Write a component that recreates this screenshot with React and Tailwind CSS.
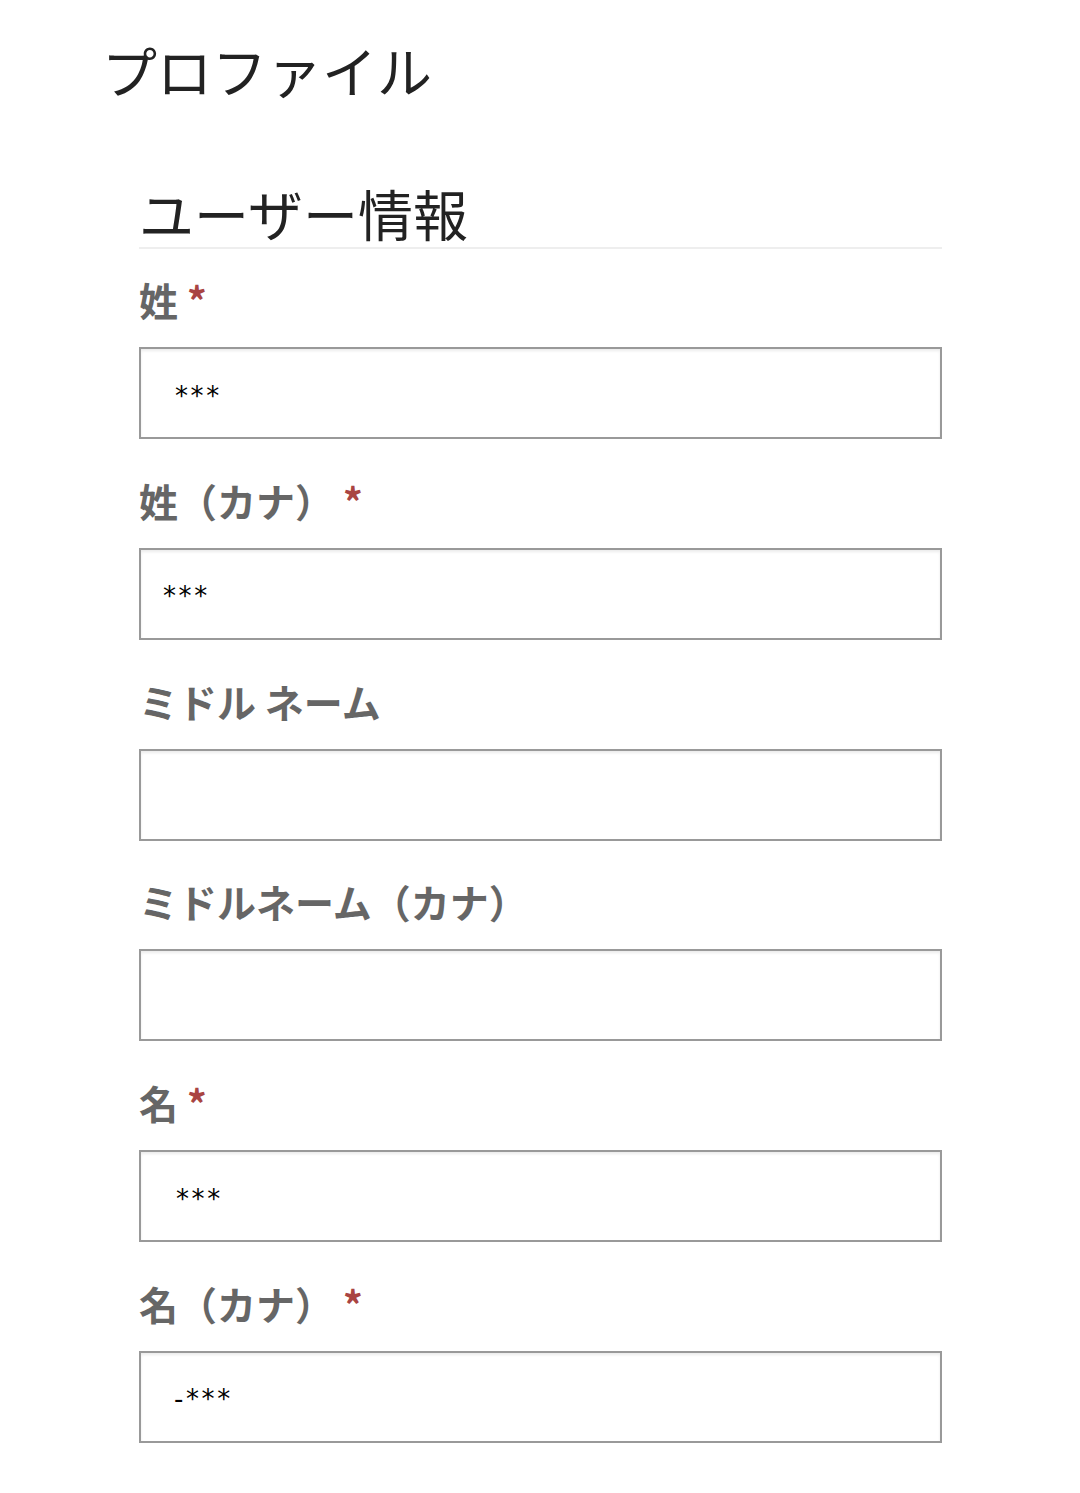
const jp = { fontFamily: '"Noto Sans CJK JP", "Noto Sans", sans-serif' };

const fields = [
  { label: "姓", required: true, value: "***", pad: "pl-[34px]" },
  { label: "姓（カナ）", required: true, value: "***", pad: "pl-[22px]" },
  { label: "ミドル ネーム", required: false, value: "", pad: "pl-[34px]" },
  { label: "ミドルネーム（カナ）", required: false, value: "", pad: "pl-[34px]" },
  { label: "名", required: true, value: "***", pad: "pl-[35px]" },
  { label: "名（カナ）", required: true, value: "-***", pad: "pl-[33px]" },
];

function Field({ label, required, value, pad }) {
  return (
    <div>
      <label className="block text-[39px] leading-none font-bold text-[#666]" style={jp}>
        {label}
        {required && <span className="ml-[9px] text-[#a94442]">*</span>}
      </label>
      <div
        className={`mt-[28px] h-[92px] pt-[6px] border-2 border-[#999] bg-white shadow-[inset_0_2px_3px_rgba(0,0,0,0.08)] flex items-center ${pad}`}
      >
        <span
          className="text-[26px] tracking-[0.1em] text-black"
          style={{ fontFamily: '"DejaVu Sans", sans-serif' }}
        >
          {value}
        </span>
      </div>
    </div>
  );
}

export default function App() {
  return (
    <div className="min-h-[1493px] bg-white text-[#222]" style={jp}>
      <h1 className="pl-[102px] pt-[42px] text-[55px] leading-none font-normal">プロファイル</h1>

      <div className="ml-[139px] w-[803px] pb-[52px]">
        <h2 className="mt-[88px] pb-[7px] border-b-2 border-[#eee] text-[55px] leading-none font-normal">
          ユーザー情報
        </h2>
        {/* fields */}
        <div className="mt-[31px] flex flex-col gap-[41.8px]">
          {fields.map((f) => (
            <Field key={f.label} {...f} />
          ))}
        </div>
      </div>
    </div>
  );
}
